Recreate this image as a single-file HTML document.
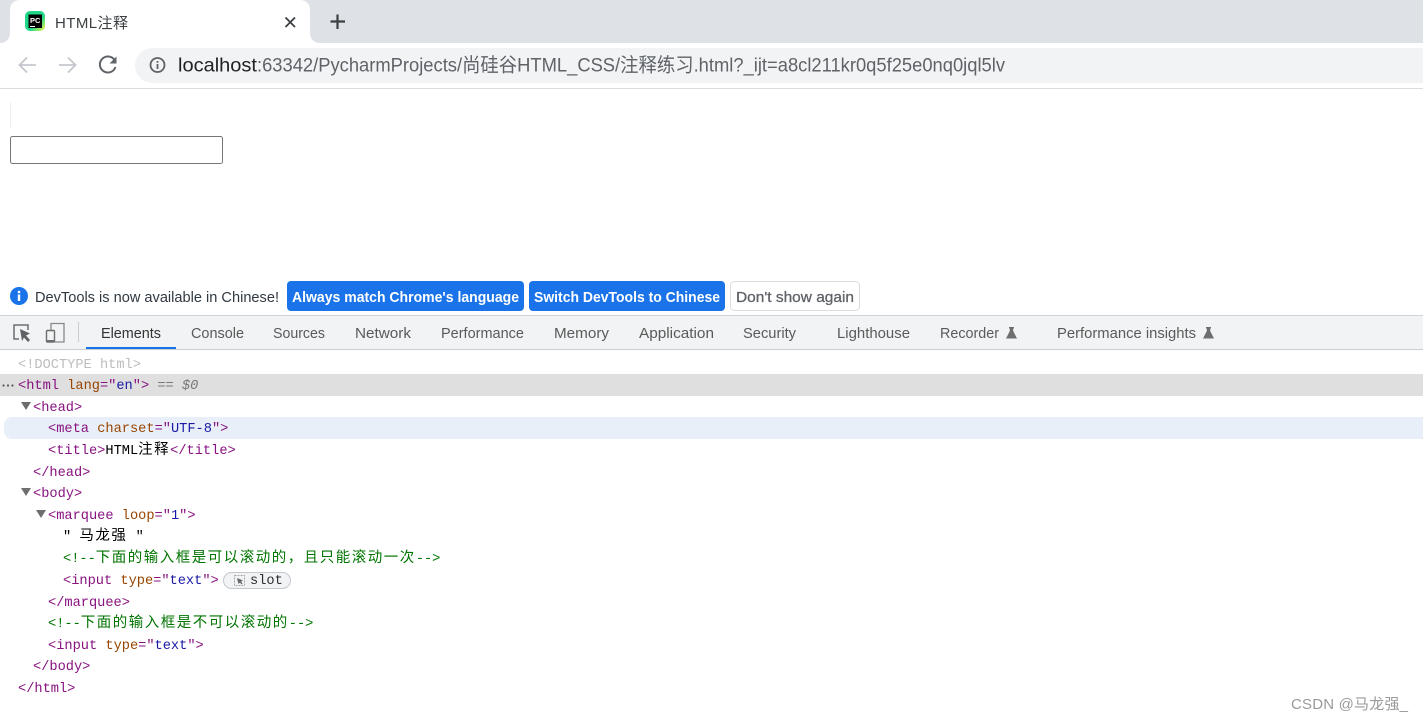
<!DOCTYPE html>
<html lang="zh"><head><meta charset="utf-8"><title>HTML注释</title>
<style>
html,body{margin:0;padding:0;background:#fff;width:1423px;height:720px;overflow:hidden}
svg{display:block}
text{white-space:pre}
.u{font-family:"Liberation Sans","Noto Sans CJK SC",sans-serif}
.tb{font-size:14.6px;fill:#5a5a5a}
.m{font-family:"Liberation Mono","Noto Sans CJK SC",monospace;font-size:13.67px}
.c{font-family:"Noto Sans CJK SC",sans-serif;font-size:14.5px;letter-spacing:1.5px}
.t{fill:#881280}.a{fill:#994500}.v{fill:#1a1aa6}.g{fill:#007400}.k{fill:#000}
</style></head><body>
<svg width="1423" height="720" viewBox="0 0 1423 720" xmlns="http://www.w3.org/2000/svg">
<rect width="1423" height="720" fill="#fff"/>
<!-- tab strip -->
<rect width="1423" height="43" fill="#dee1e6"/>
<path d="M0 43H320C314 43 310 39 310 33V10C310 4 306 0 300 0H20C14 0 10 4 10 10V33C10 39 6 43 0 43Z" fill="#fff"/>
<defs><linearGradient id="pc" x1="0" y1="0" x2="1" y2="1"><stop offset="0" stop-color="#21d789"/><stop offset=".6" stop-color="#21d789"/><stop offset="1" stop-color="#fcf84a"/></linearGradient></defs>
<rect x="25" y="11" width="20" height="20" rx="5" fill="url(#pc)"/>
<rect x="28.500" y="14.500" width="13.500" height="13.500" fill="#000"/>
<text x="30" y="23" class="u" font-size="7.500" font-weight="700" fill="#fff">PC</text>
<rect x="30" y="26" width="5" height="1" fill="#fff"/>
<text x="55" y="28" class="u" font-size="15px" fill="#3c4043" textLength="73">HTML注释</text>
<path d="M285.500 17.500L295 27M295 17.500L285.500 27" stroke="#3c4043" stroke-width="1.800" fill="none"/>
<path d="M337.500 14.500V29M330.500 21.500H345" stroke="#3c4043" stroke-width="2.200" fill="none"/>
<!-- toolbar -->
<path d="M36 65H20M27 57.500L19.500 65L27 72.500" stroke="#c4c7cb" stroke-width="1.800" fill="none"/>
<path d="M59 65H75M68 57.500L75.500 65L68 72.500" stroke="#c4c7cb" stroke-width="1.800" fill="none"/>
<path d="M114.500 60A8 8 0 1 0 115.500 67" stroke="#5f6368" stroke-width="2" fill="none"/>
<path d="M116.500 56.500V63.500H109.500Z" fill="#5f6368"/>
<path d="M1423 48H152.500A17.500 17.500 0 0 0 152.500 83H1423Z" fill="#f1f3f4"/>
<circle cx="157.500" cy="65" r="7" fill="none" stroke="#5f6368" stroke-width="1.800"/>
<rect x="156.600" y="64" width="1.800" height="5" fill="#5f6368"/><rect x="156.600" y="61" width="1.800" height="1.800" fill="#5f6368"/>
<text x="178" y="71.500" class="u" font-size="19.500px" fill="#202124" textLength="79" lengthAdjust="spacingAndGlyphs">localhost</text>
<text x="257" y="71.500" class="u" font-size="19.500px" fill="#5f6368" textLength="748" lengthAdjust="spacingAndGlyphs">:63342/PycharmProjects/尚硅谷HTML_CSS/注释练习.html?_ijt=a8cl211kr0q5f25e0nq0jql5lv</text>
<rect y="88" width="1423" height="1" fill="#dadce0"/>
<!-- page -->
<rect x="10" y="102" width="1" height="26" fill="#f0f0f0"/>
<rect x="10.500" y="136.500" width="212" height="27" rx="2" fill="#fff" stroke="#767676"/>
<!-- infobar -->
<circle cx="19" cy="296" r="9" fill="#1a73e8"/>
<rect x="17.800" y="294.500" width="2.400" height="6.500" fill="#fff"/><rect x="17.800" y="290.800" width="2.400" height="2.400" fill="#fff"/>
<text x="35" y="302" class="u" font-size="14.600px" fill="#303942" textLength="244" lengthAdjust="spacingAndGlyphs">DevTools is now available in Chinese!</text>
<rect x="287" y="281" width="237" height="30" rx="4" fill="#1a73e8"/>
<text x="292" y="302" class="u" font-size="14.600px" font-weight="700" fill="#fff" textLength="227" lengthAdjust="spacingAndGlyphs">Always match Chrome's language</text>
<rect x="529" y="281" width="196" height="30" rx="4" fill="#1a73e8"/>
<text x="534" y="302" class="u" font-size="14.600px" font-weight="700" fill="#fff" textLength="186" lengthAdjust="spacingAndGlyphs">Switch DevTools to Chinese</text>
<rect x="730.500" y="281.500" width="129" height="29" rx="4" fill="#fff" stroke="#dadce0"/>
<text x="736" y="302" class="u" font-size="14.600px" fill="#5f6368" stroke="#5f6368" stroke-width=".3" textLength="118" lengthAdjust="spacingAndGlyphs">Don't show again</text>
<!-- devtools toolbar -->
<rect y="315" width="1423" height="35" fill="#f1f3f4"/>
<rect y="315" width="1423" height="1" fill="#cfd2d6"/>
<rect y="349" width="1423" height="1" fill="#cacdd1"/>
<path d="M19 339H14V325H28V330" stroke="#6e6e6e" stroke-width="1.500" fill="none"/>
<path d="M20 329L30 333.500L26 335.500L30 340L28 342L24 337.500L22 341Z" fill="#5f6368"/>
<path d="M51 330V323.500H64V342H55" stroke="#8a8a8a" stroke-width="1.300" fill="none"/>
<rect x="46.500" y="330.500" width="8" height="11.500" rx="1" fill="none" stroke="#6e6e6e" stroke-width="1.400"/>
<rect x="47" y="340" width="7" height="2" fill="#6e6e6e"/>
<rect x="78" y="322" width="1" height="20" fill="#ccc"/>
<rect x="86" y="347" width="90" height="2" fill="#1a73e8"/>
<text x="101" y="338" class="u tb" style="fill:#333" textLength="60" lengthAdjust="spacingAndGlyphs">Elements</text>
<text x="191" y="338" class="u tb" textLength="53" lengthAdjust="spacingAndGlyphs">Console</text>
<text x="273" y="338" class="u tb" textLength="52" lengthAdjust="spacingAndGlyphs">Sources</text>
<text x="355" y="338" class="u tb" textLength="56" lengthAdjust="spacingAndGlyphs">Network</text>
<text x="441" y="338" class="u tb" textLength="83" lengthAdjust="spacingAndGlyphs">Performance</text>
<text x="554" y="338" class="u tb" textLength="55" lengthAdjust="spacingAndGlyphs">Memory</text>
<text x="639" y="338" class="u tb" textLength="75" lengthAdjust="spacingAndGlyphs">Application</text>
<text x="743" y="338" class="u tb" textLength="53" lengthAdjust="spacingAndGlyphs">Security</text>
<text x="837" y="338" class="u tb" textLength="73" lengthAdjust="spacingAndGlyphs">Lighthouse</text>
<text x="940" y="338" class="u tb" textLength="59" lengthAdjust="spacingAndGlyphs">Recorder</text>
<path d="M1009 327H1014V328.500H1013.200V331L1017 338.500H1006L1009.800 331V328.500H1009Z" fill="#6e6e6e"/>
<text x="1057" y="338" class="u tb" textLength="139" lengthAdjust="spacingAndGlyphs">Performance insights</text>
<path d="M1206 327H1211V328.500H1210.200V331L1214 338.500H1203L1206.800 331V328.500H1206Z" fill="#6e6e6e"/>
<!-- DOM tree -->
<rect y="374" width="1423" height="22" fill="#dfdfdf"/>
<path d="M1423 417H12A8 8 0 0 0 4 425V431A8 8 0 0 0 12 439H1423Z" fill="#e8eff9"/>
<circle cx="3.500" cy="385.500" r="1.100" fill="#555"/><circle cx="8" cy="385.500" r="1.100" fill="#555"/><circle cx="12.500" cy="385.500" r="1.100" fill="#555"/>
<path d="M21 402H31L26 410Z" fill="#6e6e6e"/>
<path d="M21 488H31L26 496Z" fill="#6e6e6e"/>
<path d="M36 510H46L41 518Z" fill="#6e6e6e"/>
<text x="18" y="368" class="m" fill="#bdbdbd">&lt;!DOCTYPE html&gt;</text>
<text x="18" y="389" class="m"><tspan class="t">&lt;html</tspan> <tspan class="a">lang</tspan><tspan class="t">="</tspan><tspan class="v">en</tspan><tspan class="t">"&gt;</tspan> <tspan fill="#777" font-style="italic">== $0</tspan></text>
<text x="33" y="411" class="m t">&lt;head&gt;</text>
<text x="48" y="432" class="m"><tspan class="t">&lt;meta</tspan> <tspan class="a">charset</tspan><tspan class="t">="</tspan><tspan class="v">UTF-8</tspan><tspan class="t">"&gt;</tspan></text>
<text x="48" y="454" class="m"><tspan class="t">&lt;title&gt;</tspan><tspan class="k">HTML</tspan><tspan class="c k">注释</tspan><tspan class="t">&lt;/title&gt;</tspan></text>
<text x="33" y="476" class="m t">&lt;/head&gt;</text>
<text x="33" y="497" class="m t">&lt;body&gt;</text>
<text x="48" y="519" class="m"><tspan class="t">&lt;marquee</tspan> <tspan class="a">loop</tspan><tspan class="t">="</tspan><tspan class="v">1</tspan><tspan class="t">"&gt;</tspan></text>
<text x="63" y="540" class="m k">" <tspan class="c">马龙强</tspan> "</text>
<text x="63" y="562" class="m g">&lt;!--<tspan class="c">下面的输入框是可以滚动的，且只能滚动一次</tspan>--&gt;</text>
<text x="63" y="584" class="m"><tspan class="t">&lt;input</tspan> <tspan class="a">type</tspan><tspan class="t">="</tspan><tspan class="v">text</tspan><tspan class="t">"&gt;</tspan></text>
<rect x="223.500" y="572.500" width="67" height="16" rx="8" fill="#f1f3f4" stroke="#c4c7cc"/>
<rect x="234.500" y="575.500" width="10" height="10" fill="none" stroke="#aaa" stroke-dasharray="2 1"/>
<path d="M237 578L243 580.500L241 581.500L242.500 583.500L241.500 584.500L240 582.500L238.500 584Z" fill="#666"/>
<text x="250" y="584" class="m" fill="#303030">slot</text>
<text x="48" y="606" class="m t">&lt;/marquee&gt;</text>
<text x="48" y="627" class="m g">&lt;!--<tspan class="c">下面的输入框是不可以滚动的</tspan>--&gt;</text>
<text x="48" y="649" class="m"><tspan class="t">&lt;input</tspan> <tspan class="a">type</tspan><tspan class="t">="</tspan><tspan class="v">text</tspan><tspan class="t">"&gt;</tspan></text>
<text x="33" y="670" class="m t">&lt;/body&gt;</text>
<text x="18" y="692" class="m t">&lt;/html&gt;</text>
<text x="1291" y="709" class="u" font-size="15px" fill="#9a9a9a" textLength="117">CSDN @马龙强_</text>
</svg>
</body></html>
